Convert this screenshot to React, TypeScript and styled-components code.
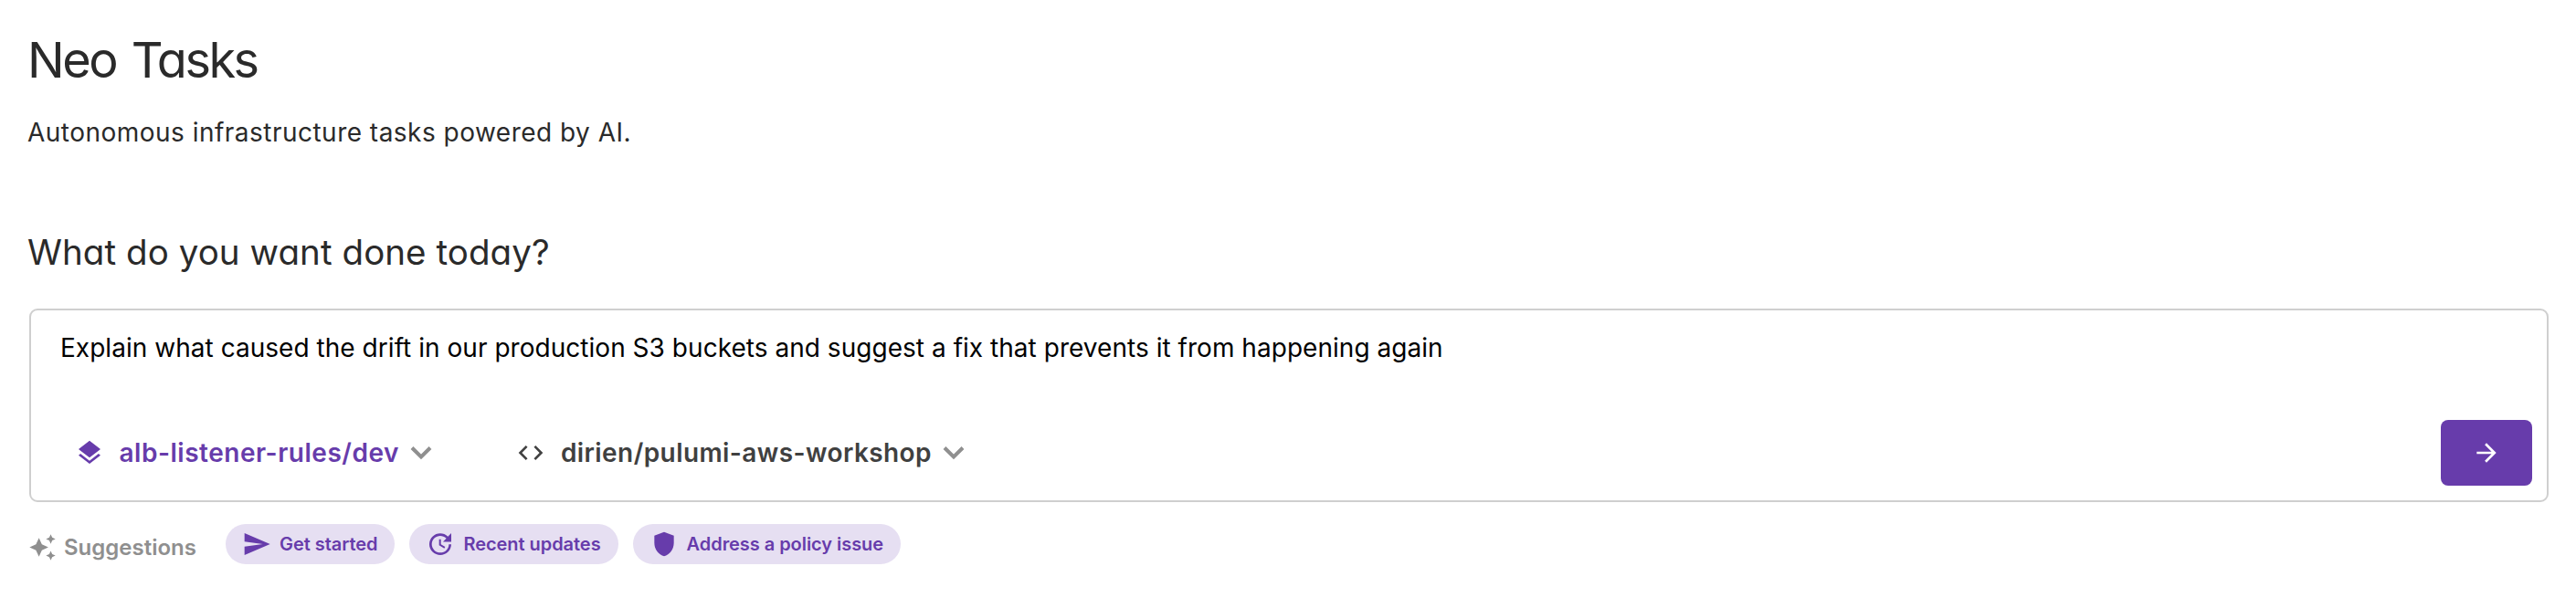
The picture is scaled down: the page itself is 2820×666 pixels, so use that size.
import React from "react";
import styled, { createGlobalStyle } from "styled-components";
import {
  MdArrowForward,
  MdAutoAwesome,
  MdCode,
  MdLayers,
  MdSend,
  MdUpdate,
} from "react-icons/md";

const purple = "#673cab";

const GlobalStyle = createGlobalStyle`
  *, *::before, *::after { box-sizing: border-box; }
  body {
    margin: 0;
    background: #fff;
    color: #2a2a2a;
    font-family: Inter, "Liberation Sans", sans-serif;
  }
`;

const Page = styled.main`
  display: flex;
  flex-direction: column;
  height: 666px;
  padding: 34px 30px 0 30px;
`;

const Title = styled.h1`
  margin: 0;
  font-size: 54px;
  line-height: 64px;
  font-weight: 400;
  letter-spacing: -2.5px;
  word-spacing: 4px;
  font-feature-settings: "cv11";
`;

const Subtitle = styled.p`
  margin: 27px 0 0;
  font-size: 28px;
  line-height: 40px;
  letter-spacing: 0.48px;
`;

const Question = styled.h2`
  margin: 87px 0 0;
  font-size: 38.5px;
  line-height: 48px;
  font-weight: 400;
  letter-spacing: 0.07px;
  font-feature-settings: "cv11";
`;

const Composer = styled.section`
  display: flex;
  flex-direction: column;
  justify-content: space-between;
  height: 212px;
  margin: 38px 0 0 2px;
  padding: 21px 16px 16px 32px;
  border: 2px solid #cfcfcf;
  border-radius: 9px;
`;

const Prompt = styled.p`
  margin: 0;
  color: #000;
  font-size: 28px;
  line-height: 40px;
  letter-spacing: 0.035px;
`;

const Toolbar = styled.div`
  display: flex;
  align-items: center;
  height: 72px;
  padding-left: 16px;
`;

const Picker = styled.button<{ $color: string; $tracking: number }>`
  display: flex;
  align-items: center;
  margin: 0 92px 0 0;
  padding: 0;
  border: 0;
  background: none;
  color: ${(p) => p.$color};
  font: 600 28px/40px Inter, "Liberation Sans", sans-serif;
  letter-spacing: ${(p) => p.$tracking}px;
`;

const PickerLabel = styled.span`
  margin: 0 12.5px 0 16.5px;
`;

const Submit = styled.button`
  display: grid;
  place-items: center;
  width: 100px;
  height: 72px;
  margin-left: auto;
  padding: 0;
  border: 0;
  border-radius: 8px;
  background: ${purple};
  color: #fff;
`;

const Suggestions = styled.div`
  display: flex;
  align-items: center;
  gap: 16px;
  height: 44px;
  margin: 24px 0 0 1px;
`;

const SuggestionsLabel = styled.div`
  display: flex;
  align-items: center;
  gap: 8px;
  width: 200px;
  padding-top: 7px;
  color: #8f8f8f;
  font-size: 24px;
  line-height: 32px;
  font-weight: 600;
`;

const Chip = styled.button`
  display: flex;
  align-items: center;
  gap: 9px;
  height: 44px;
  padding: 0 19px 0 18px;
  border: 0;
  border-radius: 22px;
  background: #e6dff2;
  color: ${purple};
  font: 600 20px/28px Inter, "Liberation Sans", sans-serif;
  letter-spacing: -0.05px;
  white-space: nowrap;
`;

const Chevron = () => (
  <svg width="24" height="16" viewBox="0 0 24 16" fill="none">
    <path d="M2 2.5L12 12.5L22 2.5" stroke="#8f8f8f" strokeWidth="4" />
  </svg>
);

const Shield = ({ size }: { size: number }) => (
  <svg width={size} height={size} viewBox="0 0 24 24" fill="currentColor">
    <path d="M12 2L4 5v6.09c0 5.05 3.41 9.76 8 10.91 4.59-1.15 8-5.86 8-10.91V5z" />
  </svg>
);

const suggestions = [
  { label: "Get started", Icon: MdSend },
  { label: "Recent updates", Icon: MdUpdate },
  { label: "Address a policy issue", Icon: Shield },
];

export default function App() {
  return (
    <>
      <GlobalStyle />
      <Page>
        <Title>Neo Tasks</Title>
        <Subtitle>Autonomous infrastructure tasks powered by AI.</Subtitle>
        <Question>What do you want done today?</Question>
        <Composer>
          <Prompt>
            Explain what caused the drift in our production S3 buckets and
            suggest a fix that prevents it from happening again
          </Prompt>
          <Toolbar>
            <Picker $color={purple} $tracking={0.52}>
              <MdLayers size={32} />
              <PickerLabel>alb-listener-rules/dev</PickerLabel>
              <Chevron />
            </Picker>
            <Picker $color="#404040" $tracking={0.42}>
              <MdCode size={32} />
              <PickerLabel>dirien/pulumi-aws-workshop</PickerLabel>
              <Chevron />
            </Picker>
            <Submit aria-label="Submit">
              <MdArrowForward size={32} />
            </Submit>
          </Toolbar>
        </Composer>
        <Suggestions>
          <SuggestionsLabel>
            <MdAutoAwesome size={31} />
            Suggestions
          </SuggestionsLabel>
          {suggestions.map(({ label, Icon }) => (
            <Chip key={label}>
              <Icon size={32} />
              {label}
            </Chip>
          ))}
        </Suggestions>
      </Page>
    </>
  );
}
